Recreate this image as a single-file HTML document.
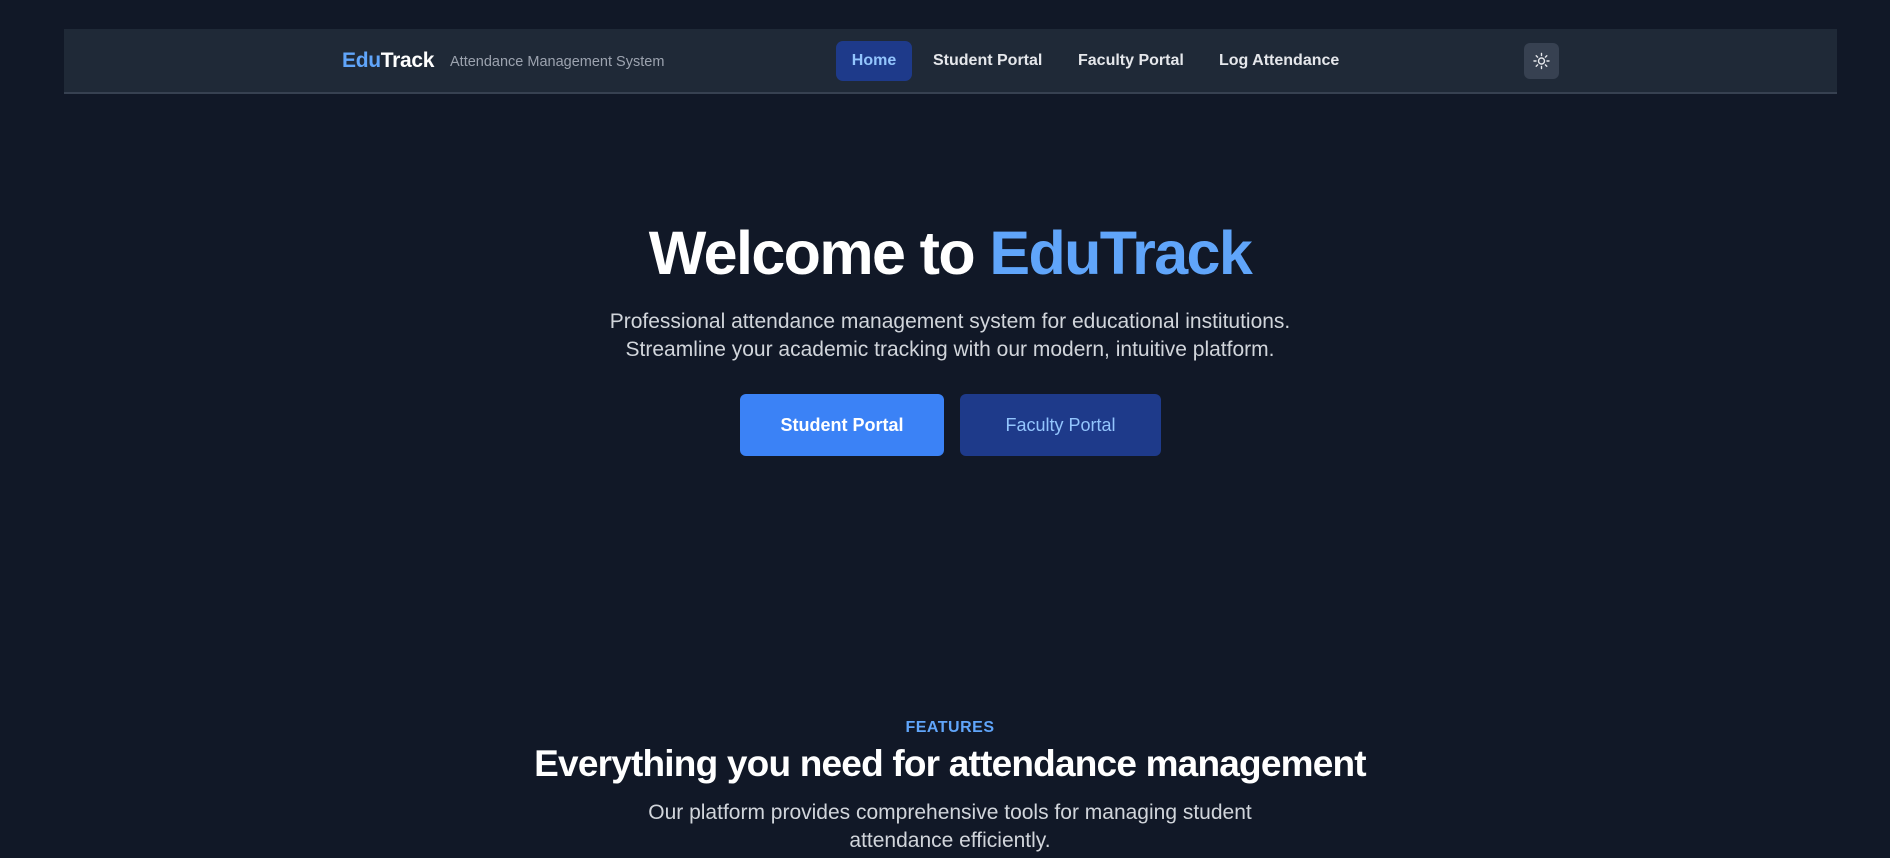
<!DOCTYPE html>
<html><head><meta charset="utf-8"><style>
*{margin:0;padding:0;box-sizing:border-box}
body{width:1890px;height:858px;overflow:hidden;background:#111827;font-family:"Liberation Sans",sans-serif;color:#f3f4f6;position:relative}
.nav{position:absolute;left:64px;top:29px;width:1773px;height:65px;background:#1f2937;border-bottom:2px solid #374151}
.abs{position:absolute;white-space:nowrap}
.logo{left:278px;top:20px;font-size:21px;font-weight:bold;color:#fff;letter-spacing:-0.3px}
.logo span{color:#60a5fa}
.sub{left:386px;top:25px;font-size:14.5px;color:#9ca3af}
.home{left:772px;top:12px;width:76px;height:40px;background:#1e3a8a;border-radius:7px;color:#93c5fd;font-size:16px;font-weight:bold;text-align:center;line-height:40px}
.nl{top:23px;font-size:16px;font-weight:bold;color:#e5e7eb}
.sun{left:1460px;top:14px;width:35px;height:36px;background:#374151;border-radius:6px}
h1{position:absolute;left:0;width:1900px;top:218px;text-align:center;font-size:61px;font-weight:bold;letter-spacing:-1.6px;color:#fff}
h1 span{color:#60a5fa}
.p{position:absolute;left:0;width:1900px;text-align:center;font-size:21px;color:#d1d5db;line-height:28px}
.btn{position:absolute;top:394px;height:62px;border-radius:6px;font-size:18px;font-weight:bold;text-align:center;line-height:62px}
</style></head><body>
<div class="nav">
<div class="abs logo"><span>Edu</span>Track</div>
<div class="abs sub">Attendance Management System</div>
<div class="abs home">Home</div>
<div class="abs nl" style="left:869px">Student Portal</div>
<div class="abs nl" style="left:1014px">Faculty Portal</div>
<div class="abs nl" style="left:1155px">Log Attendance</div>
<div class="abs sun"><svg width="35" height="36" viewBox="0 0 35 36"><g stroke="#e5e7eb" stroke-width="1.4" fill="none" stroke-linecap="round"><circle cx="17.5" cy="18" r="3"/><path d="M17.5 10.5v2M17.5 23.5v2M10 18h2M23 18h2M12.2 12.7l1.4 1.4M21.4 21.9l1.4 1.4M12.2 23.3l1.4-1.4M21.4 14.1l1.4-1.4"/></g></svg></div>
</div>
<h1>Welcome to <span>EduTrack</span></h1>
<div class="p" style="top:308px">Professional attendance management system for educational institutions.<br>Streamline your academic tracking with our modern, intuitive platform.</div>
<div class="btn" style="left:740px;width:204px;background:#3b82f6;color:#fff">Student Portal</div>
<div class="btn" style="left:960px;width:201px;background:#1e3a8a;color:#93c5fd;font-weight:normal">Faculty Portal</div>
<div class="p" style="top:714px;font-size:16px;font-weight:bold;color:#60a5fa;letter-spacing:0.5px">FEATURES</div>
<div class="p" style="top:742px;font-size:37px;font-weight:bold;color:#fff;letter-spacing:-0.8px;line-height:44px">Everything you need for attendance management</div>
<div class="p" style="top:799px;font-size:21px;line-height:28px">Our platform provides comprehensive tools for managing student<br>attendance efficiently.</div>
</body></html>
